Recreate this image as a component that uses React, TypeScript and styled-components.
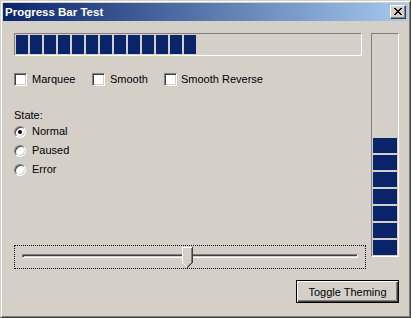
import React from "react";
import styled, { createGlobalStyle } from "styled-components";

const FACE = "#d4d0c8";
const CHUNK = "#0a246a";

const Global = createGlobalStyle`
  html, body { margin: 0; padding: 0; background: ${FACE}; }
  body {
    font-family: "Liberation Sans", Arial, sans-serif;
    font-size: 11px;
    color: #000;
  }
`;

const Window = styled.div`
  box-sizing: border-box;
  width: 411px;
  height: 318px;
  background: ${FACE};
  border: 1px solid;
  border-color: ${FACE} #404040 #404040 ${FACE};
  box-shadow: inset 1px 1px #fff, inset -1px -1px #808080;
  padding: 2px;
  display: flex;
  flex-direction: column;
`;

const TitleBar = styled.div`
  height: 18px;
  flex: none;
  display: flex;
  align-items: center;
  justify-content: space-between;
  padding: 0 2px;
  background: linear-gradient(to right, #0a246a, #a6caf0);
  color: #fff;
  font-weight: bold;
  font-size: 11.5px;
`;

const CloseButton = styled.div`
  box-sizing: border-box;
  width: 16px;
  height: 14px;
  background: ${FACE};
  border: 1px solid;
  border-color: #fff #404040 #404040 #fff;
  box-shadow: inset -1px -1px #808080;
  display: flex;
  align-items: flex-start;
  justify-content: flex-start;
  padding: 2px 0 0 3px;
`;

const Body = styled.div`
  flex: 1;
  padding: 12px 9px 0 11px;
  display: flex;
  flex-direction: column;
`;

const MainRow = styled.div`
  display: flex;
  gap: 5px;
  align-items: flex-start;
`;

const LeftColumn = styled.div`
  width: 352px;
  display: flex;
  flex-direction: column;
  align-items: flex-start;
`;

const HBar = styled.div`
  box-sizing: border-box;
  width: 348px;
  height: 23px;
  border: 1px solid;
  border-color: #808080 #fff #fff #808080;
  padding: 1px;
  display: flex;
  gap: 2px;
`;

const HChunk = styled.div`
  width: 12px;
  height: 19px;
  background: ${CHUNK};
`;

const VBar = styled.div`
  box-sizing: border-box;
  width: 28px;
  height: 224px;
  border: 1px solid;
  border-color: #808080 #fff #fff #808080;
  padding: 1px;
  display: flex;
  flex-direction: column-reverse;
  gap: 2px;
`;

const VChunk = styled.div`
  width: 24px;
  height: 15px;
  flex: none;
  background: ${CHUNK};
`;

const CheckRow = styled.div`
  margin-top: 17px;
  display: grid;
  grid-template-columns: 78px 72px auto;
`;

const Option = styled.label<{ $gap?: number }>`
  display: flex;
  align-items: center;
  gap: ${(p) => p.$gap ?? 5}px;
  line-height: 13px;
  height: 13px;
  white-space: nowrap;
`;

const CheckBox = styled.span`
  box-sizing: border-box;
  width: 13px;
  height: 13px;
  flex: none;
  background: #fff;
  border: 1px solid;
  border-color: #808080 #fff #fff #808080;
  box-shadow: inset 1px 1px #404040, inset -1px -1px ${FACE};
`;

const GroupLabel = styled.div`
  margin-top: 23px;
  line-height: 13px;
`;

const RadioGroup = styled.div`
  display: flex;
  flex-direction: column;
`;

const RadioRow = styled.label`
  display: flex;
  align-items: center;
  gap: 6px;
  height: 19px;
  line-height: 13px;
`;

const Radio = styled.span<{ $checked?: boolean }>`
  box-sizing: border-box;
  width: 12px;
  height: 12px;
  flex: none;
  border-radius: 50%;
  background: #fff;
  border: 1px solid;
  border-color: #808080 #fff #fff #808080;
  box-shadow: inset 1px 1px #404040, inset -1px -1px ${FACE};
  display: flex;
  align-items: center;
  justify-content: center;
  &::after {
    content: "";
    display: ${(p) => (p.$checked ? "block" : "none")};
    width: 4px;
    height: 4px;
    border-radius: 50%;
    background: #000;
  }
`;

const Slider = styled.div`
  position: relative;
  box-sizing: border-box;
  margin-top: 66px;
  width: 352px;
  height: 24px;
  border: 1px dotted #000;
  padding: 8px 7px 0;
`;

const Track = styled.div`
  box-sizing: border-box;
  height: 4px;
  border: 1px solid;
  border-color: #808080 #fff #fff #808080;
  box-shadow: inset 1px 1px #404040;
`;

const Thumb = styled.svg`
  position: absolute;
  top: 1px;
  display: block;
`;

const ButtonRow = styled.div`
  margin-top: 11px;
  display: flex;
  justify-content: flex-end;
`;

const PushButton = styled.button`
  box-sizing: border-box;
  width: 103px;
  height: 23px;
  padding: 0;
  font-family: "Liberation Sans", Arial, sans-serif;
  font-size: 11px;
  color: #000;
  background: ${FACE};
  border: 1px solid #000;
  box-shadow: inset 1px 1px #fff, inset -1px -1px #404040, inset -2px -2px #808080;
  border-radius: 0;
  outline: none;
`;

const X_ROWS = ["11000011", "01100110", "00111100", "00011000", "00111100", "01100110", "11000011"];

function CloseGlyph() {
  return (
    <svg width="8" height="7" viewBox="0 0 8 7" shapeRendering="crispEdges">
      {X_ROWS.flatMap((row, y) =>
        row.split("").map((c, x) => (c === "1" ? <rect key={`${x}-${y}`} x={x} y={y} width="1" height="1" fill="#000" /> : null))
      )}
    </svg>
  );
}

function ThumbGlyph({ left }: { left: number }) {
  const px: Array<[number, number, string]> = [];
  for (let x = 0; x < 10; x++) px.push([x, 0, "#fff"]);
  for (let y = 0; y < 16; y++) px.push([0, y, "#fff"]);
  for (let y = 0; y < 16; y++) px.push([10, y, "#404040"]);
  for (let y = 1; y < 16; y++) px.push([9, y, "#808080"]);
  for (let i = 0; i < 4; i++) px.push([1 + i, 16 + i, "#fff"]);
  for (let i = 0; i < 5; i++) px.push([9 - i, 16 + i, "#404040"]);
  for (let i = 0; i < 4; i++) px.push([8 - i, 16 + i, "#808080"]);
  return (
    <Thumb width="11" height="21" viewBox="0 0 11 21" shapeRendering="crispEdges" style={{ left }}>
      <polygon points="0,0 11,0 11,16 5.5,21.5 0,16" fill={FACE} />
      {px.map(([x, y, c], i) => (
        <rect key={i} x={x} y={y} width="1" height="1" fill={c} />
      ))}
    </Thumb>
  );
}

export default function App() {
  const hChunks = 13;
  const vChunks = 7;
  const sliderValue = 0.4923;
  const trackWidth = 336;
  const thumbLeft = 7 + Math.round(sliderValue * (trackWidth - 11));

  return (
    <>
      <Global />
      <Window>
        <TitleBar>
          <span>Progress Bar Test</span>
          <CloseButton>
            <CloseGlyph />
          </CloseButton>
        </TitleBar>
        <Body>
          <MainRow>
            <LeftColumn>
              <HBar>
                {Array.from({ length: hChunks }, (_, i) => (
                  <HChunk key={i} />
                ))}
              </HBar>
              <CheckRow>
                <Option>
                  <CheckBox />
                  Marquee
                </Option>
                <Option>
                  <CheckBox />
                  Smooth
                </Option>
                <Option $gap={4}>
                  <CheckBox />
                  Smooth Reverse
                </Option>
              </CheckRow>
              <GroupLabel>State:</GroupLabel>
              <RadioGroup>
                <RadioRow>
                  <Radio $checked />
                  Normal
                </RadioRow>
                <RadioRow>
                  <Radio />
                  Paused
                </RadioRow>
                <RadioRow>
                  <Radio />
                  Error
                </RadioRow>
              </RadioGroup>
              <Slider>
                <Track />
                <ThumbGlyph left={thumbLeft} />
              </Slider>
            </LeftColumn>
            <VBar>
              {Array.from({ length: vChunks }, (_, i) => (
                <VChunk key={i} />
              ))}
            </VBar>
          </MainRow>
          <ButtonRow>
            <PushButton>Toggle Theming</PushButton>
          </ButtonRow>
        </Body>
      </Window>
    </>
  );
}
